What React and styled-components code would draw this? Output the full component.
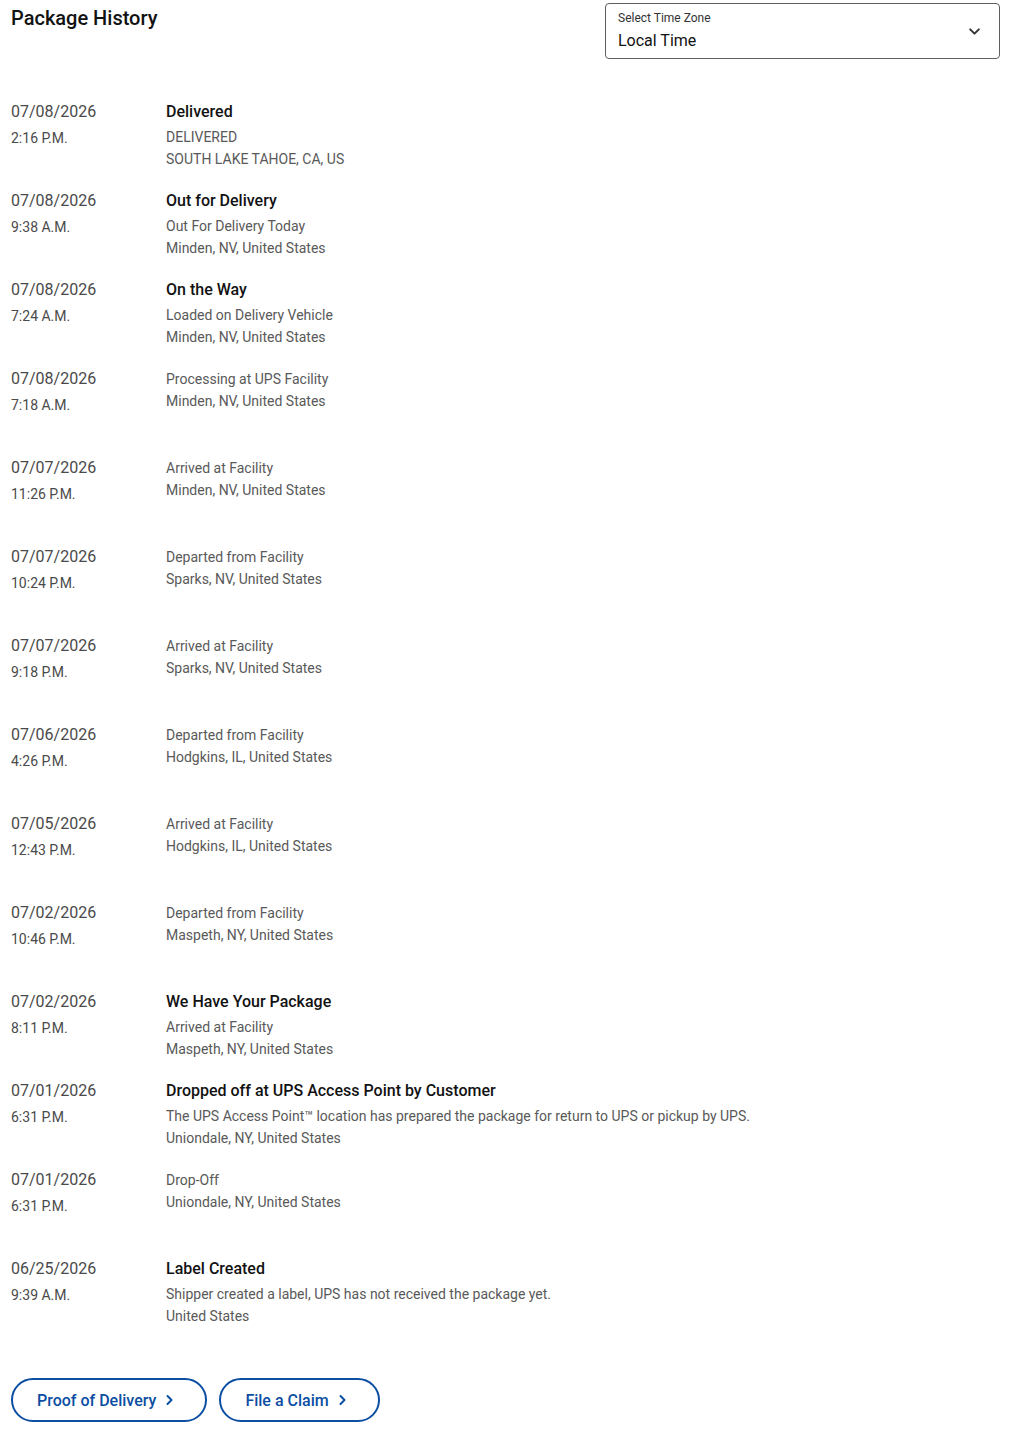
import React from "react";
import styled, { createGlobalStyle } from "styled-components";

const Global = createGlobalStyle`
  html, body { margin: 0; padding: 0; background: #fff; }
  body { font-family: Roboto, "Noto Sans", Arial, sans-serif; color: #121212; }
  * { box-sizing: border-box; }
`;

const Page = styled.div`
  width: 1009px;
  padding: 3px 9px 0 11px;
`;

const Header = styled.div`
  display: flex;
  justify-content: space-between;
  align-items: flex-start;
`;

const Title = styled.h2`
  margin: 2px 0 0;
  font-size: 20px;
  line-height: 26px;
  font-weight: 500;
  color: #121212;
`;

const Select = styled.div`
  width: 395px;
  height: 56px;
  border: 1px solid #5f5f5f;
  border-radius: 4px;
  display: flex;
  align-items: center;
  justify-content: space-between;
  padding: 0 18px 0 12px;
`;

const SelectText = styled.div`
  display: flex;
  flex-direction: column;
`;

const SelectLabel = styled.span`
  font-size: 12px;
  line-height: 16px;
  color: #333;
`;

const SelectValue = styled.span`
  font-size: 16px;
  line-height: 22px;
  color: #121212;
  margin-top: 4px;
`;

const List = styled.div`
  margin-top: 41px;
  display: flex;
  flex-direction: column;
`;

const Row = styled.div`
  display: grid;
  grid-template-columns: 155px 1fr;
  height: 89px;
`;

const When = styled.div`
  display: flex;
  flex-direction: column;
`;

const DateText = styled.span`
  font-size: 16px;
  line-height: 24px;
  color: #4a4a4a;
`;

const TimeText = styled.span`
  font-size: 14px;
  line-height: 20px;
  margin-top: 4px;
  color: #4a4a4a;
`;

const Details = styled.div`
  display: flex;
  flex-direction: column;
  padding-top: ${(p) => (p.$titled ? "0" : "1px")};
`;

const Status = styled.span`
  font-size: 16px;
  line-height: 24px;
  font-weight: 500;
  color: #121212;
  margin-bottom: 2px;
`;

const Line = styled.span`
  font-size: 14px;
  line-height: 22px;
  color: #595959;
`;

const Actions = styled.div`
  display: flex;
  gap: 12px;
  margin-top: 32px;
`;

const PillButton = styled.button`
  height: 44px;
  padding: 0 30px 0 24px;
  border: 2px solid #0b4ea2;
  border-radius: 22px;
  background: #fff;
  color: #0b4ea2;
  font-family: Roboto, Arial, sans-serif;
  font-size: 16px;
  font-weight: 500;
  display: flex;
  align-items: center;
  gap: 7px;
  cursor: pointer;
`;

const Chevron = ({ dir = "down", size = 12, color = "#333", stroke = 2 }) => (
  <svg width={size} height={size} viewBox="0 0 12 12" fill="none">
    {dir === "down" ? (
      <path d="M2 4l4 4 4-4" stroke={color} strokeWidth={stroke} strokeLinecap="round" strokeLinejoin="round" />
    ) : (
      <path d="M4.5 2l4 4-4 4" stroke={color} strokeWidth={stroke} strokeLinecap="round" strokeLinejoin="round" />
    )}
  </svg>
);

const events = [
  { date: "07/08/2026", time: "2:16 P.M.", status: "Delivered", lines: ["DELIVERED", "SOUTH LAKE TAHOE, CA, US"] },
  { date: "07/08/2026", time: "9:38 A.M.", status: "Out for Delivery", lines: ["Out For Delivery Today", "Minden, NV, United States"] },
  { date: "07/08/2026", time: "7:24 A.M.", status: "On the Way", lines: ["Loaded on Delivery Vehicle", "Minden, NV, United States"] },
  { date: "07/08/2026", time: "7:18 A.M.", lines: ["Processing at UPS Facility", "Minden, NV, United States"] },
  { date: "07/07/2026", time: "11:26 P.M.", lines: ["Arrived at Facility", "Minden, NV, United States"] },
  { date: "07/07/2026", time: "10:24 P.M.", lines: ["Departed from Facility", "Sparks, NV, United States"] },
  { date: "07/07/2026", time: "9:18 P.M.", lines: ["Arrived at Facility", "Sparks, NV, United States"] },
  { date: "07/06/2026", time: "4:26 P.M.", lines: ["Departed from Facility", "Hodgkins, IL, United States"] },
  { date: "07/05/2026", time: "12:43 P.M.", lines: ["Arrived at Facility", "Hodgkins, IL, United States"] },
  { date: "07/02/2026", time: "10:46 P.M.", lines: ["Departed from Facility", "Maspeth, NY, United States"] },
  { date: "07/02/2026", time: "8:11 P.M.", status: "We Have Your Package", lines: ["Arrived at Facility", "Maspeth, NY, United States"] },
  {
    date: "07/01/2026",
    time: "6:31 P.M.",
    status: "Dropped off at UPS Access Point by Customer",
    lines: [
      "The UPS Access Point\u2122 location has prepared the package for return to UPS or pickup by UPS.",
      "Uniondale, NY, United States",
    ],
  },
  { date: "07/01/2026", time: "6:31 P.M.", lines: ["Drop-Off", "Uniondale, NY, United States"] },
  {
    date: "06/25/2026",
    time: "9:39 A.M.",
    status: "Label Created",
    lines: ["Shipper created a label, UPS has not received the package yet.", "United States"],
  },
];

export default function App() {
  return (
    <Page>
      <Global />
      <Header>
        <Title>Package History</Title>
        <Select>
          <SelectText>
            <SelectLabel>Select Time Zone</SelectLabel>
            <SelectValue>Local Time</SelectValue>
          </SelectText>
          <Chevron dir="down" size={13} color="#333" stroke={1.8} />
        </Select>
      </Header>
      <List>
        {events.map((e, i) => (
          <Row key={i}>
            <When>
              <DateText>{e.date}</DateText>
              <TimeText>{e.time}</TimeText>
            </When>
            <Details $titled={!!e.status}>
              {e.status && <Status>{e.status}</Status>}
              {e.lines.map((l, j) => (
                <Line key={j}>{l}</Line>
              ))}
            </Details>
          </Row>
        ))}
      </List>
      <Actions>
        <PillButton>
          Proof of Delivery
          <Chevron dir="right" size={12} color="#0b4ea2" stroke={2} />
        </PillButton>
        <PillButton>
          File a Claim
          <Chevron dir="right" size={12} color="#0b4ea2" stroke={2} />
        </PillButton>
      </Actions>
    </Page>
  );
}
